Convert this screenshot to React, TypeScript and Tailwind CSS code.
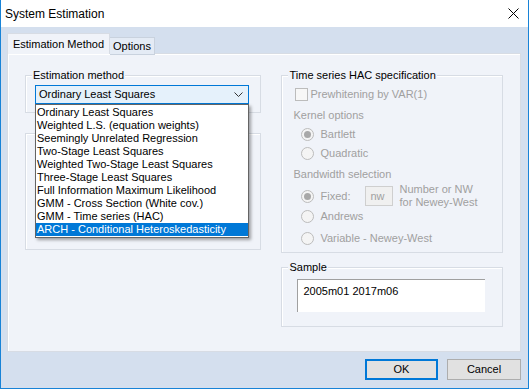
import React from "react";

const methods = [
  "Ordinary Least Squares",
  "Weighted L.S. (equation weights)",
  "Seemingly Unrelated Regression",
  "Two-Stage Least Squares",
  "Weighted Two-Stage Least Squares",
  "Three-Stage Least Squares",
  "Full Information Maximum Likelihood",
  "GMM - Cross Section (White cov.)",
  "GMM - Time series (HAC)",
  "ARCH - Conditional Heteroskedasticity",
];

function GroupBox({ label, className, children }: { label?: string; className: string; children?: React.ReactNode }) {
  return (
    <div className={`relative border border-[#d7dce4] shadow-[inset_1px_1px_0_#ffffff] ${className}`}>
      {label && (
        <span className="absolute left-[6px] -top-[8px] bg-[#f0f3f9] px-[1px] leading-[14px] text-black">{label}</span>
      )}
      {children}
    </div>
  );
}

function Radio({ checked }: { checked?: boolean }) {
  return (
    <span className="w-[13px] h-[13px] rounded-full border border-[#bcbcbc] bg-[#f4f4f4] flex items-center justify-center shrink-0">
      {checked && <span className="w-[7px] h-[7px] rounded-full bg-[#a8a8a8]" />}
    </span>
  );
}

export default function App() {
  return (
    <div className="w-[529px] h-[389px] flex flex-col border-x border-b border-[#1883d7] bg-[#d4dfee] font-['Liberation_Sans',sans-serif] text-[11px] text-black overflow-hidden">
      {/* Title bar */}
      <div className="h-[27px] bg-white flex items-center justify-between pl-[4px] pr-[8px] shrink-0">
        <span className="text-[12px]">System Estimation</span>
        <svg width="11" height="11" viewBox="0 0 11 11" className="mr-[1px]">
          <path d="M0.5 0.5 L10.5 10.5 M10.5 0.5 L0.5 10.5" stroke="#000" strokeWidth="1" />
        </svg>
      </div>

      <div className="flex-1 flex flex-col pl-[6px] pr-[7px] pt-[6px]">
        {/* Tabs */}
        <div className="flex items-end h-[21px] relative z-10">
          <div className="h-[21px] w-[103px] bg-[#f0f3f9] border border-b-0 border-[#d7dce4] flex items-center justify-center">
            Estimation Method
          </div>
          <div className="h-[18px] w-[45px] bg-[#e4ebf5] border border-l-0 border-[#c9d2de] flex items-center justify-center pt-[1px] mb-[-1px]">
            Options
          </div>
        </div>

        {/* Panel */}
        <div className="h-[299px] -mt-[1px] bg-[#f0f3f9] border border-[#d7dce4] shadow-[inset_1px_1px_0_#ffffff] flex gap-[20px] pl-[17px] pr-[17px] pt-[21px]">
          {/* Left column */}
          <div className="w-[237px] flex flex-col">
            <GroupBox label="Estimation method" className="h-[38px] pl-[9px] pt-[9px]">
              <div className="relative w-[214px]">
                <div className="h-[19px] border border-[#0078d7] bg-[#e5f1fb] flex items-center justify-between pl-[3px] pr-[5px]">
                  <span>Ordinary Least Squares</span>
                  <svg width="9" height="6" viewBox="0 0 9 6">
                    <path d="M0.5 0.5 L4.5 4.5 L8.5 0.5" fill="none" stroke="#333" strokeWidth="1" />
                  </svg>
                </div>
                {/* Open dropdown list */}
                <div className="absolute left-0 top-[19px] w-[214px] bg-white border border-[#646464] pt-[1px] pb-[1px] z-20 shadow-[2px_2px_3px_rgba(0,0,0,0.35)]">
                  {methods.map((m, i) => (
                    <div
                      key={m}
                      className={`h-[13px] leading-[13px] pl-[1px] whitespace-nowrap ${
                        i === methods.length - 1 ? "bg-[#0078d7] text-white" : ""
                      }`}
                    >
                      {m}
                    </div>
                  ))}
                </div>
              </div>
            </GroupBox>
            <GroupBox className="h-[117px] mt-[20px]" />
          </div>

          {/* Right column */}
          <div className="w-[222px] flex flex-col">
            <GroupBox label="Time series HAC specification" className="h-[178px] flex flex-col text-[#a0a0a0]">
              <div className="h-[17px] mt-[10px] pl-[13px] flex items-center gap-[2px]">
                <span className="w-[13px] h-[13px] border border-[#bcbcbc] bg-[#f7f7f7] shrink-0" />
                <span>Prewhitening by VAR(1)</span>
              </div>
              <div className="h-[16px] mt-[4px] pl-[11px] flex items-center">Kernel options</div>
              <div className="h-[19px] mt-[2px] pl-[19px] flex items-center gap-[6px]">
                <Radio checked />
                <span>Bartlett</span>
              </div>
              <div className="h-[19px] pl-[19px] flex items-center gap-[6px]">
                <Radio />
                <span>Quadratic</span>
              </div>
              <div className="h-[16px] mt-[3px] pl-[11px] flex items-center">Bandwidth selection</div>
              <div className="h-[22px] mt-[3px] pl-[19px] flex items-center">
                <Radio checked />
                <span className="ml-[6px] w-[45px]">Fixed:</span>
                <span className="w-[28px] h-[20px] border border-[#cfcfcf] bg-[#f0f0f0] flex items-center pl-[4px]">nw</span>
                <span className="ml-[6px] flex flex-col leading-[13px]">
                  <span>Number or NW</span>
                  <span>for Newey-West</span>
                </span>
              </div>
              <div className="h-[19px] pl-[19px] flex items-center gap-[6px]">
                <Radio />
                <span>Andrews</span>
              </div>
              <div className="h-[19px] mt-[3px] pl-[19px] flex items-center gap-[6px]">
                <Radio />
                <span>Variable - Newey-West</span>
              </div>
            </GroupBox>

            <GroupBox label="Sample" className="h-[60px] mt-[14px] pl-[15px] pt-[11px]">
              <div className="w-[188px] h-[33px] bg-white border-t border-l border-t-[#a0a0a0] border-l-[#a0a0a0] pl-[5px] pt-[3px]">
                2005m01 2017m06
              </div>
            </GroupBox>
          </div>
        </div>

        {/* Buttons */}
        <div className="flex justify-end gap-[9px] mt-[7px]">
          <button className="w-[73px] h-[21px] bg-[#e1e1e1] border-2 border-[#0078d7] flex items-center justify-center">OK</button>
          <button className="w-[74px] h-[21px] bg-[#e1e1e1] border border-[#adadad] flex items-center justify-center">Cancel</button>
        </div>
      </div>
    </div>
  );
}
